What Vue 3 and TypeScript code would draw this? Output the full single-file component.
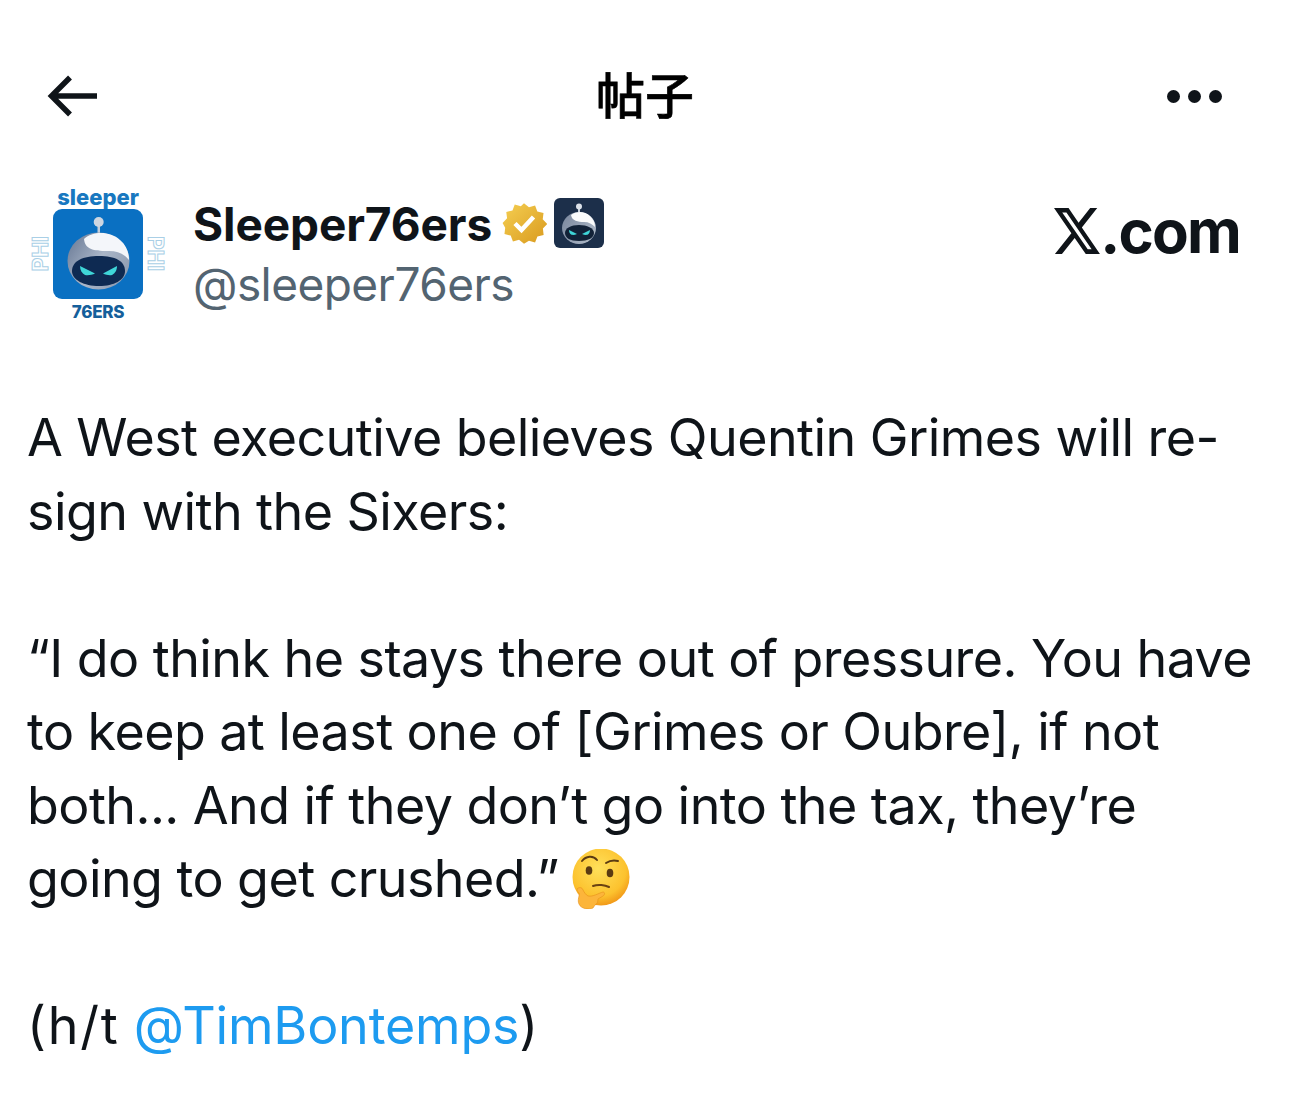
<script setup lang="ts">
const lines = [
  'A West executive believes Quentin Grimes will re-',
  'sign with the Sixers:',
]
const quote = [
  '“I do think he stays there out of pressure. You have',
  'to keep at least one of [Grimes or Oubre], if not',
  'both... And if they don’t go into the tax, they’re',
]
</script>

<template>
  <div class="page">
    <header class="topbar">
      <svg class="back" viewBox="0 0 50 42" width="50" height="42">
        <path d="M50 21H5M23 2.500 4.500 21 23 39.500" fill="none" stroke="#0f1419" stroke-width="5.500" />
      </svg>
      <div class="title">帖子</div>
      <div class="dots"><i /><i /><i /></div>
    </header>

    <section class="author">
      <div class="avatar">
        <div class="av-top">sleeper</div>
        <div class="av-mid">
          <span class="phi phi-l">PHI</span>
          <div class="av-tile">
            <svg viewBox="0 0 90 90" width="90" height="90">
              <defs>
                <linearGradient id="head" x1="0" y1="0.2" x2="1" y2="0.8">
                  <stop offset="0" stop-color="#6f7f9a" />
                  <stop offset="0.5" stop-color="#aab6c8" />
                  <stop offset="1" stop-color="#8c9ab0" />
                </linearGradient>
              </defs>
              <rect x="44.500" y="16" width="2.500" height="10" fill="#c4cedb" />
              <circle cx="45.700" cy="13" r="5" fill="#ced6e1" />
              <ellipse cx="45.500" cy="52" rx="31" ry="28.500" fill="url(#head)" />
              <path d="M31 30c9-8 26-8 36 1 6 5 9 12 9 20-5-6-11-9-20-9-12 0-24 0-25-12Z" fill="#f4f6fa" />
              <path d="M19 62c0-10 11-15 27-15s26 5 26 15c0 9-11 15-26 15S19 71 19 62Z" fill="#0e2a52" />
              <path d="M27 57l15 7.500c-3 1.500-7 2-10 1.500-3-1.500-5-5-5-9Z" fill="#3fd6d8" />
              <path d="M64 57l-14 7.500c3 1.500 6 2 9 1.500 3-1.500 5-5 5-9Z" fill="#3fd6d8" />
            </svg>
          </div>
          <span class="phi phi-r">PHI</span>
        </div>
        <div class="av-bottom">76ERS</div>
      </div>

      <div class="names">
        <div class="name-row">
          <span class="name">Sleeper76ers</span>
          <svg class="badge" viewBox="0 0 46 46" width="46" height="46">
            <defs>
              <linearGradient id="gold" x1="0" y1="0" x2="1" y2="1">
                <stop offset="0" stop-color="#f5cf52" />
                <stop offset="1" stop-color="#d99a1e" />
              </linearGradient>
            </defs>
            <path
              d="M23 1l5.500 4.500 6.800-2 2.500 6.600 6.900 1.700-.9 7 5 5.200-4.800 5.200.8 7-6.900 1.800-2.600 6.600-6.800-2L23 46l-5.500-4.400-6.800 2-2.500-6.600-6.900-1.800.8-7L-.8 23l5-5.200-.9-7 6.900-1.700 2.500-6.600 6.800 2Z"
              transform="translate(2.300 2.300) scale(0.9)"
              fill="url(#gold)"
            />
            <path d="M14 23.500l6.500 6.500L32.500 17" fill="none" stroke="#fff" stroke-width="4.500" />
          </svg>
          <svg class="tile" viewBox="0 0 50 50" width="50" height="50">
            <defs>
              <linearGradient id="head2" x1="0" y1="0.2" x2="1" y2="0.8">
                <stop offset="0" stop-color="#7d8aa0" />
                <stop offset="1" stop-color="#aeb9c8" />
              </linearGradient>
            </defs>
            <rect width="50" height="50" rx="6" fill="#1c2f4a" />
            <rect x="24" y="9" width="2" height="6" fill="#c8d1dd" />
            <circle cx="25" cy="8.500" r="3" fill="#dbe1e9" />
            <ellipse cx="25" cy="30" rx="17" ry="16" fill="url(#head2)" />
            <path d="M17 17c5-4 14-4 19 1 3 3 5 6 5 11-3-3-6-5-11-5-6 0-12-1-13-7Z" fill="#fafbfc" />
            <path d="M11 35c0-5 6-8 14-8s15 3 15 8-6 8-15 8-14-3-14-8Z" fill="#122238" />
            <path d="M15 32l8 4c-2 1-4 1-5.500 .8-1.500-.8-2.500-2.500-2.500-4.800ZM36 32l-8 4c2 1 4 1 5.500 .8 1.500-.8 2.500-2.500 2.500-4.800Z" fill="#3fd6d8" />
          </svg>
        </div>
        <div class="handle">@sleeper76ers</div>
      </div>

      <div class="brand">
        <svg viewBox="1.250 2.250 21.600 19.500" width="46" height="46" preserveAspectRatio="none">
          <path
            d="M18.244 2.250h3.308l-7.227 8.260 8.502 11.240H16.170l-5.214-6.817L4.990 21.750H1.680l7.730-8.835L1.254 2.250H8.080l4.713 6.231zm-1.161 17.520h1.833L7.084 4.126H5.117z"
            fill="#0f1419"
          />
        </svg>
        <span>.com</span>
      </div>
    </section>

    <article class="body">
      <p><template v-for="l in lines" :key="l">{{ l }}<br /></template></p>
      <p>
        <template v-for="l in quote" :key="l">{{ l }}<br /></template>
        going to get crushed.”
        <svg class="emoji" viewBox="0 0 60 60" width="60" height="60">
          <defs>
            <radialGradient id="face" cx="0.45" cy="0.35" r="0.7">
              <stop offset="0" stop-color="#ffe05a" />
              <stop offset="0.7" stop-color="#fcc22e" />
              <stop offset="1" stop-color="#ef8e12" />
            </radialGradient>
          </defs>
          <circle cx="31" cy="28" r="28.500" fill="url(#face)" />
          <path d="M12 12c4-5 11-6 15-1" fill="none" stroke="#5a3a12" stroke-width="2" stroke-linecap="round" />
          <path d="M36 14c3-2 8-3 12-2" fill="none" stroke="#5a3a12" stroke-width="2" stroke-linecap="round" />
          <ellipse cx="19" cy="21.500" rx="3.300" ry="4.300" fill="#5a3a12" />
          <ellipse cx="40" cy="24" rx="3.300" ry="4.300" fill="#5a3a12" />
          <path d="M23 37c5-2 12-1 16 1" fill="none" stroke="#6b4212" stroke-width="2" stroke-linecap="round" />
          <path d="M7 40c2-2 5-2 6 1 1 2 3 5 5 6 5 1 11-3 15-4 2 0 2 3 0 4l-5 3c0 3-1 5-3 6l-2 3c-4 2-12 1-14-4-2-4 1-9 0-11-1-1-2-2-2-4Z" fill="#fcb53b" stroke="#e58f1a" stroke-width="0.600" />
        </svg>
      </p>
      <p><span class="ht">(h/t</span> <span class="mention">@TimBontemps</span>)</p>
    </article>
  </div>
</template>

<style>
html, body {
  background: #fff;
}
</style>

<style scoped>
.page {
  width: 1290px;
  height: 1118px;
  overflow: hidden;
  background: #fff;
  color: #0f1419;
  font-family: Inter, "Noto Sans CJK SC", sans-serif;
  padding: 0 28px;
  box-sizing: border-box;
}

.topbar {
  display: grid;
  grid-template-columns: 1fr auto 1fr;
  align-items: center;
  height: 56px;
  margin-top: 68px;
  padding: 0 19px;
}

.back {
  display: block;
}

.title {
  font-family: "Noto Sans CJK SC", sans-serif;
  font-size: 49px;
  font-weight: 500;
  line-height: 50px;
  margin-bottom: 6px;
  color: #000;
  -webkit-text-stroke: 0.6px #000;
}

.dots {
  display: flex;
  justify-content: flex-end;
  gap: 8px;
  margin-right: 21px;
}

.dots i {
  width: 13px;
  height: 13px;
  border-radius: 50%;
  background: #0f1419;
}

.author {
  display: flex;
  align-items: flex-start;
  margin-top: 62px;
}

.avatar {
  width: 140px;
  flex: none;
  display: flex;
  flex-direction: column;
  align-items: center;
}

.av-top {
  font-size: 22px;
  font-weight: 800;
  line-height: 22px;
  color: #1878c0;
  letter-spacing: 0;
}

.av-mid {
  display: flex;
  align-items: center;
  gap: 2px;
  margin-top: 1px;
}

.av-tile {
  width: 90px;
  height: 90px;
  border-radius: 9px;
  background: #0a70c2;
  overflow: hidden;
}

.phi {
  font-size: 21px;
  font-weight: 700;
  line-height: 20px;
  width: 20px;
  color: #fff;
  -webkit-text-stroke: 1px #a9cfe6;
  writing-mode: vertical-rl;
  text-align: center;
}

.phi-l {
  transform: rotate(180deg);
}

.av-bottom {
  font-size: 17px;
  font-weight: 800;
  line-height: 20px;
  color: #155f9b;
  margin-top: 3px;
  letter-spacing: -0.3px;
}

.names {
  margin-left: 25px;
  margin-top: 9px;
}

.name-row {
  display: flex;
  align-items: center;
  height: 56px;
}

.name {
  font-size: 46px;
  font-weight: 700;
  letter-spacing: -0.1px;
  line-height: 56px;
  padding-top: 2px;
}

.badge {
  margin-left: 9px;
}

.tile {
  margin-left: 7px;
}

.handle {
  font-size: 46px;
  line-height: 58px;
  color: #536471;
  margin-top: 4px;
  letter-spacing: -0.55px;
}

.brand {
  margin-left: auto;
  margin-right: 22px;
  margin-top: 22px;
  display: flex;
  align-items: flex-end;
  font-size: 60px;
  font-weight: 700;
  line-height: 46px;
  letter-spacing: -1.800px;
}

.brand span {
  line-height: 46px;
}

.body {
  margin: 79px 0 0 -1px;
  font-size: 52px;
  line-height: 73.500px;
  letter-spacing: -0.57px;
  white-space: nowrap;
}

.body p {
  margin: 0 0 73.500px;
}

.ht {
  letter-spacing: 1.800px;
}

.emoji {
  vertical-align: -12px;
  margin-left: -3px;
}

.mention {
  color: #1d9bf0;
  letter-spacing: -0.2px;
}
</style>
